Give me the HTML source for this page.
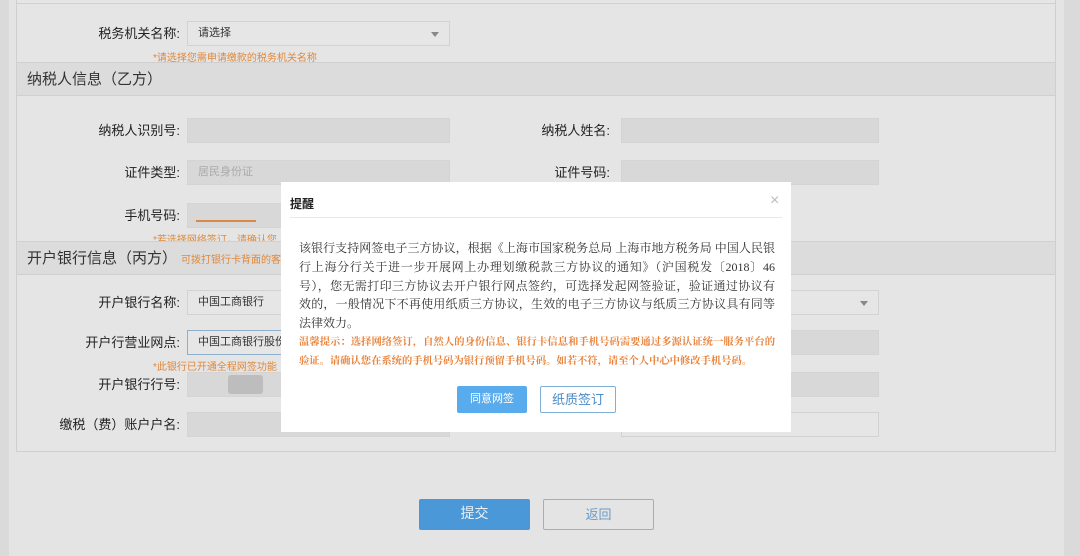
<!DOCTYPE html>
<html><head><meta charset="utf-8"><style>
*{margin:0;padding:0;box-sizing:border-box}
body{width:1080px;height:556px;background:#e4e4e4;position:relative;overflow:hidden;font-family:"Liberation Sans","Noto Sans CJK SC",sans-serif;color:#333}
.a{position:absolute}
.strip{left:0;top:0;width:9px;height:556px;background:#dadada}
.stripr{left:1064px;top:0;width:16px;height:556px;background:#dadada}
.box{left:16px;top:-2px;width:1040px;height:454px;border:1px solid #cfcfcf;background:#e5e5e5}
.hdr{left:17px;width:1038px;height:34px;background:#dcdcdc;border-top:1px solid #d0d0d0;border-bottom:1px solid #d0d0d0;font-size:15px;line-height:33px;padding-left:10px;color:#333}
.lbl{font-size:13px;text-align:right;width:170px;line-height:25px;color:#222}
.inp{height:25px;border:1px solid #d2d2d2;font-size:11px;line-height:23px;padding-left:10px;color:#333}
.dis{background:#d8d8d8;border-color:#d4d4d4}
.ed{background:#e6e6e6}
.hint{font-size:10px;color:#e0883a}
.arr{position:absolute;right:10px;top:10px;border-left:4px solid transparent;border-right:4px solid transparent;border-top:5px solid #888}
.btn{height:31px;font-size:14px;text-align:center;line-height:29px;border-radius:2px}
.modal{left:281px;top:182px;width:510px;height:250px;background:#fff}
.serif{font-family:"Liberation Serif","Noto Serif CJK SC",serif}
.ln{width:476px;white-space:nowrap;text-align:justify;text-align-last:justify;overflow:hidden}
</style></head><body>
<div class="a strip"></div><div class="a stripr"></div>
<div class="a box"></div>
<div class="a" style="left:17px;top:3px;width:1038px;height:1px;background:#d0d0d0"></div>

<div class="a lbl" style="left:10px;top:21px">税务机关名称:</div>
<div class="a inp ed" style="left:187px;top:21px;width:263px">请选择<span class="arr"></span></div>
<div class="a hint" style="left:153px;top:49px">*请选择您需申请缴款的税务机关名称</div>

<div class="a hdr" style="top:62px">纳税人信息（乙方）</div>

<div class="a lbl" style="left:10px;top:118px">纳税人识别号:</div>
<div class="a inp dis" style="left:187px;top:118px;width:263px"></div>
<div class="a lbl" style="left:440px;top:118px">纳税人姓名:</div>
<div class="a inp dis" style="left:621px;top:118px;width:258px"></div>

<div class="a lbl" style="left:10px;top:160px">证件类型:</div>
<div class="a inp dis" style="left:187px;top:160px;width:263px;color:#aaa">居民身份证</div>
<div class="a lbl" style="left:440px;top:160px">证件号码:</div>
<div class="a inp dis" style="left:621px;top:160px;width:258px"></div>

<div class="a lbl" style="left:10px;top:203px">手机号码:</div>
<div class="a inp dis" style="left:187px;top:203px;width:263px"><div style="position:absolute;left:8px;top:16px;width:60px;height:2px;background:#d9884a"></div></div>
<div class="a hint" style="left:153px;top:231px">*若选择网络签订，请确认您</div>

<div class="a hdr" style="top:241px">开户银行信息（丙方）<span style="font-size:10px;color:#e0883a;margin-left:4px">可拨打银行卡背面的客服热线</span></div>

<div class="a lbl" style="left:10px;top:290px">开户银行名称:</div>
<div class="a inp ed" style="left:187px;top:290px;width:263px">中国工商银行</div>
<div class="a inp ed" style="left:621px;top:290px;width:258px"><span class="arr"></span></div>

<div class="a lbl" style="left:10px;top:330px">开户行营业网点:</div>
<div class="a inp ed" style="left:187px;top:330px;width:263px;border-color:#8fb0cc">中国工商银行股份</div>
<div class="a inp dis" style="left:621px;top:330px;width:258px"></div>
<div class="a hint" style="left:153px;top:358px">*此银行已开通全程网签功能</div>

<div class="a lbl" style="left:10px;top:372px">开户银行行号:</div>
<div class="a inp dis" style="left:187px;top:372px;width:263px"><div style="position:absolute;left:40px;top:2px;width:35px;height:19px;background:#bdbdbd;border-radius:3px"></div></div>
<div class="a inp dis" style="left:621px;top:372px;width:258px"></div>

<div class="a lbl" style="left:10px;top:412px">缴税（费）账户户名:</div>
<div class="a inp dis" style="left:187px;top:412px;width:263px"></div>
<div class="a lbl" style="left:440px;top:412px">缴税（费）账户账号:</div>
<div class="a inp ed" style="left:621px;top:412px;width:258px"></div>

<div class="a btn" style="left:419px;top:499px;width:111px;background:#4a98d8;color:#e8f1fa">提交</div>
<div class="a btn" style="left:543px;top:499px;width:111px;border:1px solid #8fb3d3;color:#6a9bc8;font-size:13px">返回</div>

<div class="a modal">
  <div class="a" style="left:9px;top:13px;font-size:12px;font-weight:bold;color:#222">提醒</div>
  <div class="a" style="left:489px;top:10px;font-size:16px;color:#bbb">×</div>
  <div class="a" style="left:9px;top:35px;width:492px;height:1px;background:#e8e8e8"></div>
  <div class="a serif" style="left:18px;top:57px;font-size:12px;line-height:18.8px;color:#333">
    <div class="ln">该银行支持网签电子三方协议，根据《上海市国家税务总局 上海市地方税务局 中国人民银</div>
    <div class="ln">行上海分行关于进一步开展网上办理划缴税款三方协议的通知》（沪国税发〔2018〕46</div>
    <div class="ln">号），您无需打印三方协议去开户银行网点签约，可选择发起网签验证，验证通过协议有</div>
    <div class="ln">效的，一般情况下不再使用纸质三方协议，生效的电子三方协议与纸质三方协议具有同等</div>
    <div style="white-space:nowrap">法律效力。</div>
  </div>
  <div class="a serif" style="left:18px;top:151px;font-size:10.3px;line-height:19px;color:#e8823a;font-weight:bold">
    <div class="ln">温馨提示：选择网络签订，自然人的身份信息、银行卡信息和手机号码需要通过多源认证统一服务平台的</div>
    <div style="white-space:nowrap">验证。请确认您在系统的手机号码为银行预留手机号码。如若不符，请至个人中心中修改手机号码。</div>
  </div>
  <div class="a btn" style="left:176px;top:204px;width:70px;height:27px;line-height:27px;font-size:11px;background:#58abed;color:#fff">同意网签</div>
  <div class="a btn" style="left:259px;top:204px;width:76px;height:27px;line-height:25px;font-size:13px;border:1px solid #7fb0d8;color:#4a8cc8">纸质签订</div>
</div>
</body></html>
